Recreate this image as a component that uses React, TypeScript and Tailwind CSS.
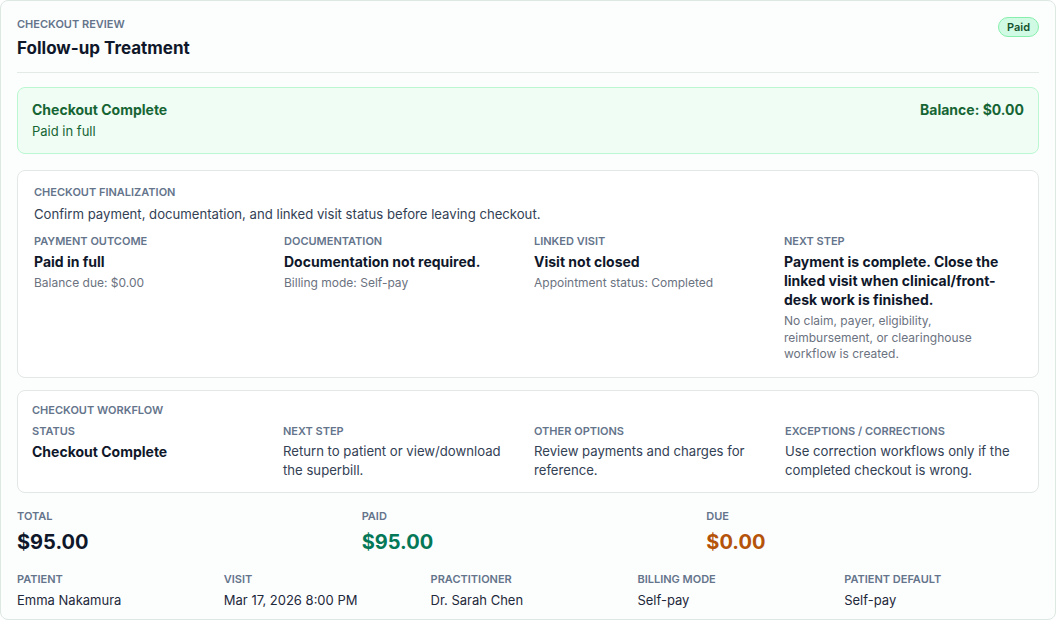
import React from "react";

const label = "text-[11px] font-semibold uppercase leading-4 text-[#64748b]";

function Field({ title, value, sub, bold = true }: { title: string; value: string; sub?: string; bold?: boolean }) {
  return (
    <div>
      <p className={label}>{title}</p>
      <p
        className={
          bold
            ? "mt-[3px] text-[14px] font-bold leading-[19px] text-[#0f172a]"
            : "mt-[3px] text-[13.15px] leading-[19px] text-[#334155]"
        }
      >
        {value}
      </p>
      {sub && <p className="mt-[4px] text-[12px] leading-[16.5px] text-[#6b7280]">{sub}</p>}
    </div>
  );
}

export default function App() {
  return (
    <div className="min-h-[620px] bg-white text-[#0f172a]" style={{ fontFamily: "Inter, 'Noto Sans', sans-serif" }}>
      <div className="h-[620px] overflow-hidden rounded-[8px] border border-[#dde8e2] bg-[#fcfdfd] px-4 pt-[15px]">
        {/* header */}
        <div className="flex items-start justify-between border-b border-[#e3ebe7] pb-3">
          <div>
            <p className={label}>Checkout review</p>
            <h1 className="mt-1 text-[17px] font-bold leading-6 text-[#0f172a]">Follow-up Treatment</h1>
          </div>
          <span className="mt-px rounded-full border border-[#86efac] bg-[#d1fae5] px-2 py-[1px] text-[11px] font-semibold leading-4 text-[#14532d]">
            Paid
          </span>
        </div>

        {/* status */}
        <div className="mt-[14px] flex items-start justify-between rounded-[8px] border border-[#bbf7d0] bg-[#f0fdf4] px-[14px] py-3">
          <div>
            <p className="text-[14px] font-bold leading-5 text-[#166534]">Checkout Complete</p>
            <p className="mt-px text-[13px] leading-5 text-[#166534]">Paid in full</p>
          </div>
          <p className="text-[14px] font-bold leading-5 text-[#166534]">Balance: $0.00</p>
        </div>

        {/* finalization */}
        <div className="mt-4 rounded-[8px] border border-[#e2e8e6] bg-white px-4 pb-[14px] pt-[13px]">
          <p className={label}>Checkout finalization</p>
          <p className="mt-1 text-[13.15px] leading-5 text-[#334155]">
            Confirm payment, documentation, and linked visit status before leaving checkout.
          </p>
          <div className="mt-[9px] grid grid-cols-4 gap-3">
            <Field title="Payment outcome" value="Paid in full" sub="Balance due: $0.00" />
            <Field title="Documentation" value="Documentation not required." sub="Billing mode: Self-pay" />
            <Field title="Linked visit" value="Visit not closed" sub="Appointment status: Completed" />
            <div className="pr-4">
              <Field
                title="Next step"
                value="Payment is complete. Close the linked visit when clinical/front-desk work is finished."
                sub="No claim, payer, eligibility, reimbursement, or clearinghouse workflow is created."
              />
            </div>
          </div>
        </div>

        {/* workflow */}
        <div className="mt-3 rounded-[8px] border border-[#e2e8e6] bg-white px-[14px] pb-[12px] pt-[11px]">
          <p className={label}>Checkout workflow</p>
          <div className="mt-[5px] grid grid-cols-4 gap-3">
            <Field title="Status" value="Checkout Complete" />
            <Field title="Next step" value="Return to patient or view/download the superbill." bold={false} />
            <Field title="Other options" value="Review payments and charges for reference." bold={false} />
            <Field title="Exceptions / corrections" value="Use correction workflows only if the completed checkout is wrong." bold={false} />
          </div>
        </div>

        {/* totals */}
        <div className="mt-[15px] grid grid-cols-3 gap-3">
          <div>
            <p className={label}>Total</p>
            <p className="mt-1 text-[20px] font-bold leading-7 text-[#0f172a]">$95.00</p>
          </div>
          <div>
            <p className={label}>Paid</p>
            <p className="mt-1 text-[20px] font-bold leading-7 text-[#047857]">$95.00</p>
          </div>
          <div>
            <p className={label}>Due</p>
            <p className="mt-1 text-[20px] font-bold leading-7 text-[#b45309]">$0.00</p>
          </div>
        </div>

        {/* meta */}
        <div className="mt-[15px] grid grid-cols-5 gap-3">
          {[
            ["Patient", "Emma Nakamura"],
            ["Visit", "Mar 17, 2026 8:00 PM"],
            ["Practitioner", "Dr. Sarah Chen"],
            ["Billing mode", "Self-pay"],
            ["Patient default", "Self-pay"],
          ].map(([t, v]) => (
            <div key={t}>
              <p className={label}>{t}</p>
              <p className="mt-[3px] text-[13px] leading-5 text-[#1e293b]">{v}</p>
            </div>
          ))}
        </div>
      </div>
    </div>
  );
}
